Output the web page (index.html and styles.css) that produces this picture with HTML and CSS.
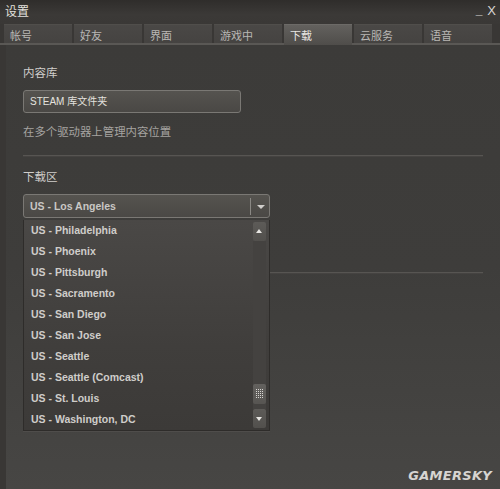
FILE: index.html
```html
<!DOCTYPE html>
<html lang="zh-CN">
<head>
<meta charset="UTF-8">
<title>设置</title>
<link rel="stylesheet" href="styles.css">
</head>
<body>

<div class="window">

    <!-- Title bar -->
    <div class="titlebar">
        <span class="title">设置</span>
        <span class="controls"><span class="min">_</span><span class="close">X</span></span>
    </div>

    <!-- Tabs -->
    <div class="tabs">
        <div class="tab">帐号</div>
        <div class="tab">好友</div>
        <div class="tab">界面</div>
        <div class="tab">游戏中</div>
        <div class="tab active">下载</div>
        <div class="tab">云服务</div>
        <div class="tab">语音</div>
    </div>

    <div class="panel">

        <!-- Content library -->
        <div class="group">
            <div class="label">内容库</div>
            <div class="field">STEAM 库文件夹</div>
            <div class="hint">在多个驱动器上管理内容位置</div>
        </div>

        <div class="rule"></div>

        <!-- Download region -->
        <div class="group">
            <div class="label">下载区</div>
            <div class="select">
                <div class="select-box">
                    <span class="select-value">US - Los Angeles</span>
                    <span class="select-arrow"></span>
                </div>

                <div class="dropdown">
                    <ul class="options">
                        <li>US - Philadelphia</li>
                        <li>US - Phoenix</li>
                        <li>US - Pittsburgh</li>
                        <li>US - Sacramento</li>
                        <li>US - San Diego</li>
                        <li>US - San Jose</li>
                        <li>US - Seattle</li>
                        <li>US - Seattle (Comcast)</li>
                        <li>US - St. Louis</li>
                        <li>US - Washington, DC</li>
                    </ul>
                    <div class="scrollbar">
                        <div class="sb-btn up"></div>
                        <div class="sb-track">
                            <div class="sb-thumb"></div>
                        </div>
                        <div class="sb-btn down"></div>
                    </div>
                </div>
            </div>
        </div>

        <div class="rule second"></div>

        <div class="watermark">GAMERSKY</div>
    </div>

</div>

</body>
</html>
```

FILE: styles.css
```css
* { box-sizing: border-box; }

body {
    margin: 0;
    background: #3a3836;
    font-family: "Liberation Sans", Arial, "Noto Sans CJK SC", sans-serif;
    color: #c8c6c3;
}

.window {
    width: 500px;
    height: 489px;
    display: flex;
    flex-direction: column;
    background: #393735;
    overflow: hidden;
}

/* Title bar */
.titlebar {
    height: 24px;
    display: flex;
    justify-content: space-between;
    align-items: flex-start;
    padding: 4px 4px 0 5px;
    background: linear-gradient(180deg, #2f2d2b, #3b3937 60%, #3a3836);
}

.title {
    font-family: "Noto Sans CJK SC", sans-serif;
    font-size: 12px;
    line-height: 14px;
    color: #e2e0dd;
}

.controls {
    display: flex;
    gap: 5px;
    font-size: 13px;
    color: #d8d6d3;
    line-height: 14px;
}

.controls .min { font-size: 12px; line-height: 13px; font-weight: bold; }

/* Tabs */
.tabs {
    display: flex;
    gap: 2px;
    padding-left: 4px;
    height: 21px;
    border-bottom: 2px solid #5a5855;
}

.tab {
    width: 68px;
    height: 19px;
    padding: 3px 0 0 6px;
    font-family: "Noto Sans CJK SC", sans-serif;
    font-size: 11px;
    line-height: 14px;
    color: #b9b7b4;
    background: linear-gradient(180deg, #4a4846, #454341);
    border-top: 1px solid #504e4b;
}

.tab.active {
    height: 21px;
    color: #e8e6e3;
    background: linear-gradient(180deg, #63615e, #4f4d4a);
    border-top: 1px solid #6c6a67;
}

/* Main panel */
.panel {
    position: relative;
    flex: 1;
    margin-left: 6px;
    padding: 20px 17px 0 17px;
    background: linear-gradient(180deg, #3c3b39, #3e3d3b 50%, #474644);
}

.group { padding-bottom: 14px; }

.label {
    font-family: "Noto Sans CJK SC", sans-serif;
    font-size: 11.5px;
    line-height: 14px;
    color: #d0cecb;
}

.field {
    width: 218px;
    height: 23px;
    margin-top: 11px;
    padding: 5px 0 0 6px;
    font-size: 10px;
    line-height: 12px;
    color: #e4e2df;
    background: linear-gradient(180deg, #55534f, #4a4845);
    border: 1px solid #7a7874;
    border-radius: 3px;
}

.hint {
    margin-top: 11px;
    font-family: "Noto Sans CJK SC", sans-serif;
    font-size: 11.4px;
    line-height: 14px;
    color: #a5a3a0;
}

.rule {
    height: 2px;
    margin-top: 3px;
    margin-bottom: 12px;
    border-top: 1px solid #575552;
    border-bottom: 1px solid #454341;
}

.rule.second { margin-top: 40px; margin-left: 247px; }

/* Region select */
.select {
    position: relative;
    width: 247px;
    margin-top: 11px;
}

.select-box {
    height: 24px;
    display: flex;
    align-items: center;
    justify-content: space-between;
    padding-left: 6px;
    background: linear-gradient(180deg, #55534f, #4a4845);
    border: 1px solid #7a7874;
    border-radius: 3px;
}

.select-value {
    font-size: 10.5px;
    font-weight: bold;
    color: #c9c7c4;
}

.select-arrow {
    position: relative;
    width: 19px;
    height: 17px;
    border-left: 1px solid #8a8884;
}

.select-arrow::after {
    content: "";
    position: absolute;
    left: 6px;
    top: 7px;
    border-left: 4px solid transparent;
    border-right: 4px solid transparent;
    border-top: 4px solid #d0cecb;
}

/* Open dropdown list */
.dropdown {
    position: absolute;
    left: 0;
    top: 26px;
    width: 247px;
    height: 211px;
    display: flex;
    background: linear-gradient(180deg, #4a4846, #403e3c 60%, #3c3a38);
    border: 1px solid #2e2c2a;
    border-top: none;
    box-shadow: 0 1px 0 #4f4d4b;
    z-index: 2;
}

.options {
    flex: 1;
    margin: 0;
    padding: 0;
    list-style: none;
}

.options li {
    height: 21px;
    padding-left: 7px;
    font-size: 10.5px;
    font-weight: bold;
    line-height: 21px;
    color: #cfcdca;
}

.scrollbar {
    width: 13px;
    margin: 2px 3px 2px 0;
    display: flex;
    flex-direction: column;
}

.sb-btn {
    position: relative;
    height: 19px;
    background: linear-gradient(180deg, #5d5b58, #52504d);
    border-radius: 2px;
}

.sb-btn.up::after,
.sb-btn.down::after {
    content: "";
    position: absolute;
    left: 3px;
    border-left: 3.5px solid transparent;
    border-right: 3.5px solid transparent;
}

.sb-btn.up::after { top: 7px; border-bottom: 4px solid #e8e6e3; }
.sb-btn.down::after { top: 8px; border-top: 4px solid #e8e6e3; }

.sb-track {
    flex: 1;
    display: flex;
    flex-direction: column;
    justify-content: flex-end;
    padding-bottom: 5px;
    background: #444240;
}

/* Thumb with a small grip of dots */
.sb-thumb {
    position: relative;
    height: 20px;
    border-radius: 2px;
    background: linear-gradient(180deg, #63615e, #575552);
}

.sb-thumb::after {
    content: "";
    position: absolute;
    left: 3px;
    top: 5px;
    width: 7px;
    height: 10px;
    background-image: conic-gradient(from 270deg at 1px 1px, #d8d6d3 0 25%, transparent 0);
    background-size: 2px 2px;
}

/* Watermark */
.watermark {
    position: absolute;
    right: 8px;
    bottom: 6px;
    font-family: "DejaVu Sans", sans-serif;
    font-size: 13px;
    font-weight: bold;
    font-style: italic;
    letter-spacing: 0.3px;
    color: #d6d4d1;
}
```
